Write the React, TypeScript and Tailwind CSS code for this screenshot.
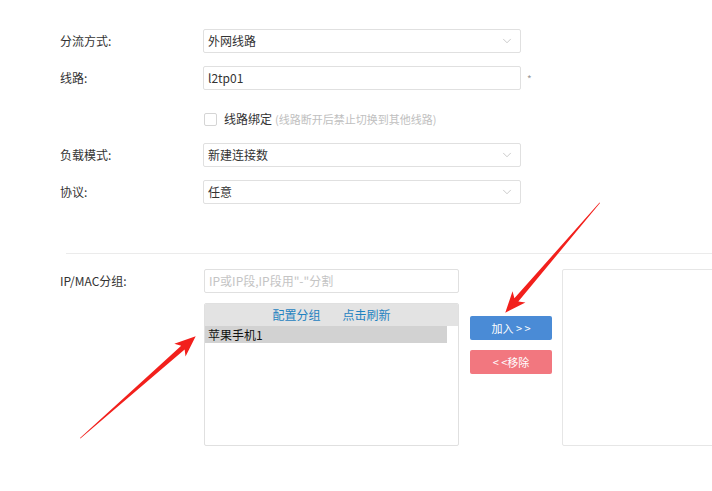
import { ChevronDown } from "lucide-react";

const font = { fontFamily: '"Noto Sans CJK SC", "Noto Sans", sans-serif' };

function Select({ value }: { value: string }) {
  return (
    <div className="flex h-[24px] w-[318px] shrink-0 items-center justify-between rounded-[2px] border border-[#e0e0e0] bg-white pl-[4px] pr-[6px] text-[12px] text-[#333]">
      <span>{value}</span>
      <ChevronDown className="h-[14px] w-[14px] text-[#b5b5b5]" strokeWidth={1.2} />
    </div>
  );
}

function Row({ label, children }: { label: string; children: React.ReactNode }) {
  return (
    <div className="flex items-center">
      <div className="w-[143px] shrink-0 text-[12px] text-[#333]">{label}</div>
      {children}
    </div>
  );
}

function Arrow({ x, y, len, angle }: { x: number; y: number; len: number; angle: number }) {
  const L = len;
  const pts = `0,0 ${L - 17},-2.6 ${L - 21},-8.5 ${L},0 ${L - 21},8.5 ${L - 17},2.6 0,0.6`;
  return (
    <g transform={`translate(${x} ${y}) rotate(${angle})`}>
      <polygon points={pts} fill="#f2201c" />
    </g>
  );
}

export default function App() {
  return (
    <div className="relative h-[491px] w-[712px] overflow-hidden bg-white" style={font}>
      <div className="pl-[60px] pt-[29px]">
        <div className="flex flex-col gap-[13px]">
          <Row label="分流方式:">
            <Select value="外网线路" />
          </Row>
          <Row label="线路:">
            <div className="flex h-[24px] w-[318px] shrink-0 items-center rounded-[2px] border border-[#e0e0e0] bg-white px-[4px] text-[12px] text-[#333]">
              l2tp01
            </div>
            <span className="ml-[6px] text-[10px] text-[#999]">*</span>
          </Row>
        </div>

        <div className="mt-[18px] flex h-[22px] items-center pl-[144px]">
          <span className="h-[13px] w-[13px] shrink-0 rounded-[2px] border border-[#d5d5d5] bg-white" />
          <span className="ml-[7px] text-[12px] text-[#333]">线路绑定</span>
          <span className="ml-[3px] text-[11px] text-[#c0c0c0]">(线路断开后禁止切换到其他线路)</span>
        </div>

        <div className="mt-[13px] flex flex-col gap-[13px]">
          <Row label="负载模式:">
            <Select value="新建连接数" />
          </Row>
          <Row label="协议:">
            <Select value="任意" />
          </Row>
        </div>

        <div className="ml-[6px] mt-[49px] h-px bg-[#ebebeb]" />

        <div className="mt-[15px] flex">
          <div className="flex h-[24px] w-[144px] shrink-0 items-center text-[12px] text-[#333]">IP/MAC分组:</div>
          <div className="flex w-[255px] shrink-0 flex-col gap-[10px]">
            <div className="flex h-[24px] items-center rounded-[2px] border border-[#e0e0e0] bg-white px-[4px] text-[12px] text-[#c4c4c4]">
              IP或IP段,IP段用"-"分割
            </div>
            <div className="h-[143px] overflow-hidden rounded-[2px] border border-[#e0e0e0] bg-white">
              <div className="flex h-[22px] items-center justify-center gap-[22px] bg-[#e3e3e3] text-[12px] text-[#1f82c0]">
                <span>配置分组</span>
                <span>点击刷新</span>
              </div>
              <div className="mr-[11px] flex h-[17px] items-center bg-[#d2d2d2] pl-[3px] text-[12px] text-[#111]">
                苹果手机1
              </div>
            </div>
          </div>
          <div className="ml-[11px] flex w-[82px] shrink-0 flex-col gap-[10px] pt-[47px]">
            <div className="flex h-[24px] items-center justify-center rounded-[2px] bg-[#4a8bd6] text-[11px] text-white">
              加入 &gt; &gt;
            </div>
            <div className="flex h-[24px] items-center justify-center rounded-[2px] bg-[#f2777f] text-[11px] text-white">
              &lt; &lt;移除
            </div>
          </div>
          <div className="ml-[10px] h-[177px] w-[160px] shrink-0 rounded-[2px] border border-[#e6e6e6] bg-white" />
        </div>
      </div>

      <svg className="pointer-events-none absolute inset-0" width="712" height="491" viewBox="0 0 712 491">
        <Arrow x={80} y={438} len={154} angle={-41.3} />
        <Arrow x={600} y={203} len={145} angle={130.8} />
      </svg>
    </div>
  );
}
